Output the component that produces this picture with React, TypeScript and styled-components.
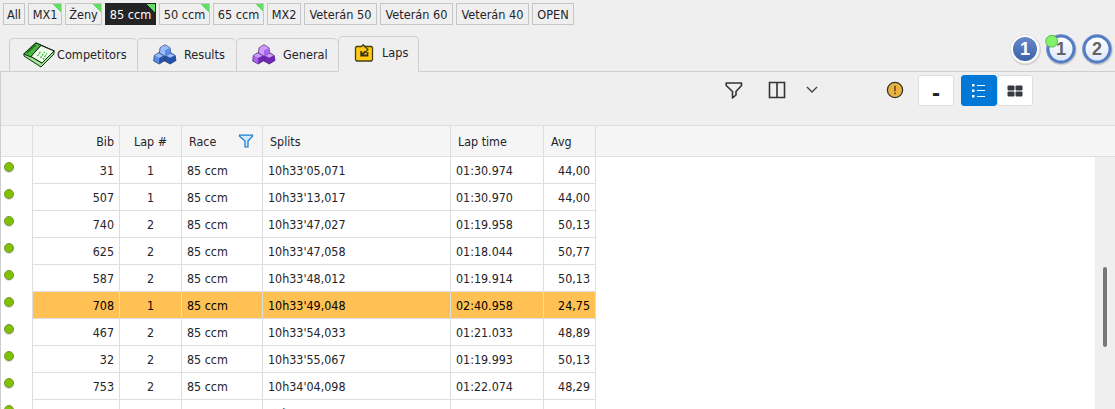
import React from "react";
import styled, { createGlobalStyle } from "styled-components";

const Global = createGlobalStyle`
  * { box-sizing: border-box; }
  html, body { margin: 0; height: 409px; overflow: hidden; background: #efefef; }
  body { font: 12.4px/16px "DejaVu Sans Condensed", "DejaVu Sans", "Noto Sans", sans-serif; font-stretch: condensed; color: #242428; }
`;

const Window = styled.div`
  width: 1115px;
  height: 409px;
  overflow: hidden;
  display: flex;
  flex-direction: column;
  background: #efefef;
  white-space: nowrap;
`;

const Filters = styled.div`
  display: flex;
  gap: 3px;
  padding: 3px 3px 0;
  height: 28px;
  flex: none;
`;

const Chip = styled.button<{ $w: number; $active?: boolean; $marked?: boolean }>`
  width: ${(p) => p.$w}px;
  height: 22px;
  padding: 2px 0 0;
  display: flex;
  align-items: center;
  justify-content: center;
  font: inherit;
  font-size: 12.6px;
  border: 1px solid ${(p) => (p.$active ? "#242424" : "#c6c6c6")};
  color: ${(p) => (p.$active ? "#fff" : "#242428")};
  background: ${(p) =>
    (p.$marked ? "linear-gradient(45deg, transparent 50%, #5fdf62 50%) top right / 8px 8px no-repeat, " : "") +
    (p.$active ? "#242424" : "#efefef")};
`;

const TabStrip = styled.div`
  display: flex;
  align-items: flex-end;
  height: 44px;
  flex: none;
  justify-content: space-between;
  box-shadow: inset 0 -1px #cecece;
`;

const Tabs = styled.div`
  display: flex;
  align-items: flex-end;
  padding-left: 9px;
`;

const Tab = styled.div<{ $w: number; $gap: number; $pad: number; $active?: boolean }>`
  width: ${(p) => p.$w}px;
  height: ${(p) => (p.$active ? 36 : 34)}px;
  padding-left: ${(p) => p.$pad}px;
  padding-bottom: ${(p) => (p.$active ? 2 : 1)}px;
  display: flex;
  align-items: center;
  gap: ${(p) => p.$gap}px;
  border: 1px solid #cecece;
  border-right-width: ${(p) => (p.$active ? 1 : 0)}px;
  border-bottom-color: ${(p) => (p.$active ? "#efefef" : "#cecece")};
  border-radius: 5px 5px 0 0;
  font-size: 12.6px;
`;

const Badges = styled.div`
  display: flex;
  height: 40px;
`;

const Toolbar = styled.div`
  height: 53px;
  flex: none;
  display: flex;
  align-items: flex-start;
  padding: 3px 0 0 724px;
  border-left: 1px solid #cecece;
`;

const ToolIcon = styled.span<{ $after: number }>`
  display: flex;
  align-items: center;
  height: 30px;
  margin-right: ${(p) => p.$after}px;
`;

const ToolButton = styled.button<{ $blue?: boolean; $after?: number }>`
  width: 36px;
  height: 31px;
  padding: 0;
  margin-right: ${(p) => p.$after ?? 0}px;
  display: flex;
  align-items: center;
  justify-content: center;
  border: 1px solid ${(p) => (p.$blue ? "#0078d7" : "#dedede")};
  border-radius: 3px;
  background: ${(p) => (p.$blue ? "#0078d7" : "#fff")};
`;

const Dash = styled.span`
  font: bold 24px/20px "Liberation Sans", sans-serif;
  color: #202024;
  padding-top: 5px;
`;

const Grid = styled.div`
  flex: 1;
  min-height: 0;
  display: flex;
  flex-direction: column;
  border-left: 1px solid #cecece;
`;

const columns = "32px 87px 62px 81px 188px 93px 52px 1fr";

const HeaderRow = styled.div`
  display: grid;
  grid-template-columns: ${columns};
  height: 32px;
  flex: none;
  border: solid #dedede;
  border-width: 1px 0;
  background: #f5f5f5;
`;

const HeadCell = styled.div<{ $align?: string }>`
  display: flex;
  align-items: center;
  justify-content: ${(p) => p.$align ?? "space-between"};
  padding: 2px ${(p) => (p.$align === "center" ? 0 : p.$align ? 5 : 8)}px 0 ${(p) => (p.$align === "center" ? 0 : 7)}px;
  border-right: 1px solid #dedede;
  &:last-child { border: 0; }
`;

const Body = styled.div`
  flex: 1;
  min-height: 0;
  display: flex;
  overflow: hidden;
`;

const Rows = styled.div`
  flex: 1;
  background: #fff;
`;

const Row = styled.div`
  display: grid;
  grid-template-columns: ${columns};
  height: 27px;
`;

const Gutter = styled.div`
  border-right: 1px solid #dedede;
  padding: 5px 0 0 3px;
`;

const Dot = styled.div`
  width: 10px;
  height: 10px;
  border-radius: 50%;
  border: 1px solid #75983e;
  background: #80c200;
  box-shadow: 0 1px 1px #d8d8d8;
`;

const Cell = styled.div<{ $align?: string; $late?: boolean }>`
  display: flex;
  align-items: center;
  justify-content: ${(p) => p.$align ?? "flex-start"};
  padding: 2px 5px 0;
  border: solid #dedede;
  border-width: 0 1px 1px 0;
  background: ${(p) => (p.$late ? "#ffc154" : "#fff")};
  color: ${(p) => (p.$late ? "#000" : "#242428")};
`;

const ScrollTrack = styled.div`
  width: 20px;
  padding: 110px 0 0 8px;
  background: #efefef;
`;

const ScrollThumb = styled.div`
  width: 4px;
  height: 80px;
  border-radius: 2px;
  background: #777;
`;

function NotesIcon() {
  return (
    <svg width="32" height="26" viewBox="0 0 32 26">
      <path d="M1 12 13 1 31 9 18 24Z" fill="#fff" stroke="#102010" strokeWidth="1.2" />
      <path d="M1 12v2L18 25 31 12V9L19 21 9 15Z" fill="#9be78d" stroke="#123012" />
      <path d="M1 12 13 1 18 3 8 15Z" fill="#49b742" stroke="#123c12" />
      <path d="M4 11 13 3" stroke="#1d7a1b" strokeWidth="1.5" />
      <path d="M8 14.5 18 3.4 31 9 19 21Z" fill="#effdea" stroke="#102010" />
      <path d="m14.5 14 3.5-5m-.5 7 4-6m-1.5 7.5 4-6" stroke="#32b82c" strokeWidth="1.3" strokeDasharray="2 1" />
    </svg>
  );
}

function CubesIcon({ light, mid, dark, edge }: { light: string; mid: string; dark: string; edge: string }) {
  const cube = (x: number, y: number, face: string, side: string) => (
    <g transform={`translate(${x} ${y})`} stroke={edge} strokeWidth=".7" strokeLinejoin="round">
      <path d="M1 3 6 0l5 3 .8 5L6 11.5.5 8.5Z" fill={face} />
      <path d="M6 5.5 11 3l.8 5L6 11.5Z" fill={side} stroke="none" />
      <path d="M1.5 3 6 .7 10.5 3 6 5.2Z" fill={light} stroke="none" />
    </g>
  );
  return (
    <svg width="24" height="21" viewBox="0 0 24 21">
      {cube(0.2, 8.5, mid, dark)}
      {cube(11.2, 8.5, dark, dark)}
      {cube(6, 0.7, light, mid)}
    </svg>
  );
}

function LapIcon() {
  return (
    <svg width="20" height="19" viewBox="0 0 20 19">
      <path d="M2.5 2.5h5L9 .9l2 1.6h6.5l1 1v12l-1 1.5h-15l-1-1.5v-12Z" fill="#ffca12" stroke="#454019" strokeWidth="1.3" />
      <path d="M9 .8 14 5.5l-3 3" fill="none" stroke="#454019" strokeWidth="1.2" />
      <path d="M7.2 7v4.5h6.3V8M7.5 11l4-3.5" fill="none" stroke="#38371e" strokeWidth="1.8" />
    </svg>
  );
}

function NumberBadge({ value, filled, online }: { value: string; filled?: boolean; online?: boolean }) {
  const id = filled ? "full" : "pale";
  return (
    <svg width="36" height="34" viewBox="0 0 36 34">
      <defs>
        <linearGradient id={id} x1="0" y1="0" x2="0" y2="1">
          <stop stopColor={filled ? "#6689c9" : "#fff"} />
          <stop offset="1" stopColor={filled ? "#3c62aa" : "#dfe7fa"} />
        </linearGradient>
      </defs>
      <circle cx="18.6" cy="18" r="15.3" fill="#c2c2c2" opacity=".65" />
      <circle cx="18" cy="17" r="14.6" fill={filled ? "#fff" : "#517cc4"} stroke={filled ? "#ddd" : "#8199c6"} strokeWidth=".7" />
      <circle cx="18" cy="17" r={filled ? 12 : 11.5} fill={`url(#${id})`} />
      <text x="18" y="23" textAnchor="middle" fontFamily="Liberation Sans, sans-serif" fontWeight="700" fontSize="18" fill={filled ? "#fff" : "#646464"}>
        {value}
      </text>
      {online && <circle cx="8.7" cy="9.2" r="5.9" fill="#83f26b" stroke="#5db84e" />}
    </svg>
  );
}

const chips: [string, number, boolean][] = [
  ["All", 22, false],
  ["MX1", 34, true],
  ["Ženy", 37, true],
  ["85 ccm", 51, true],
  ["50 ccm", 51, true],
  ["65 ccm", 51, true],
  ["MX2", 34, false],
  ["Veterán 50", 73, false],
  ["Veterán 60", 73, false],
  ["Veterán 40", 73, false],
  ["OPEN", 42, false],
];

const laps: [string, string, string, string, string][] = [
  ["31", "1", "10h33'05,071", "01:30.974", "44,00"],
  ["507", "1", "10h33'13,017", "01:30.970", "44,00"],
  ["740", "2", "10h33'47,027", "01:19.958", "50,13"],
  ["625", "2", "10h33'47,058", "01:18.044", "50,77"],
  ["587", "2", "10h33'48,012", "01:19.914", "50,13"],
  ["708", "1", "10h33'49,048", "02:40.958", "24,75"],
  ["467", "2", "10h33'54,033", "01:21.033", "48,89"],
  ["32", "2", "10h33'55,067", "01:19.993", "50,13"],
  ["753", "2", "10h34'04,098", "01:22.074", "48,29"],
  ["", "", "10h34'", "", ""],
];

export default function App() {
  return (
    <Window>
      <Global />
      <Filters>
        {chips.map(([label, w, marked]) => (
          <Chip key={label} $w={w} $marked={marked} $active={label === "85 ccm"}>
            {label}
          </Chip>
        ))}
      </Filters>
      <TabStrip>
        <Tabs>
          <Tab $w={128} $pad={13} $gap={2}><NotesIcon />Competitors</Tab>
          <Tab $w={99} $pad={15} $gap={7}>
            <CubesIcon light="#9bbdff" mid="#5a8de4" dark="#2553a8" edge="#213457" />Results
          </Tab>
          <Tab $w={102} $pad={15} $gap={7}>
            <CubesIcon light="#ce9bff" mid="#a966ec" dark="#6d29b6" edge="#482161" />General
          </Tab>
          <Tab $w={81} $pad={15} $gap={8} $active><LapIcon />Laps</Tab>
        </Tabs>
        <Badges>
          <NumberBadge value="1" filled />
          <NumberBadge value="1" online />
          <NumberBadge value="2" />
        </Badges>
      </TabStrip>
      <Toolbar>
        <ToolIcon $after={25}>
          <svg width="18" height="18" viewBox="0 0 18 18" fill="none" stroke="#333" strokeWidth="1.6" strokeLinejoin="round">
            <path d="M1.2 2h15.3v2.5L11 10.5V14l-3.5 3v-6.5L1.2 4.5Z" />
          </svg>
        </ToolIcon>
        <ToolIcon $after={20}>
          <svg width="18" height="18" viewBox="0 0 18 18" fill="none" stroke="#333" strokeWidth="1.6">
            <path d="M1.5 1.5h15v15h-15ZM9 1.5v15" />
          </svg>
        </ToolIcon>
        <ToolIcon $after={68}>
          <svg width="12" height="8" viewBox="0 0 12 8" fill="none" stroke="#444" strokeWidth="1.4">
            <path d="m1 1 5 5 5-5" />
          </svg>
        </ToolIcon>
        <ToolIcon $after={14}>
          <svg width="18" height="18" viewBox="0 0 18 18">
            <circle cx="9" cy="9" r="7.6" fill="#ebb240" stroke="#333" strokeWidth="1.3" />
            <path d="M9 4.7v5.6M9 11.6v1.7" stroke="#51411f" strokeWidth="1.4" />
          </svg>
        </ToolIcon>
        <ToolButton $after={7}><Dash>-</Dash></ToolButton>
        <ToolButton $blue>
          <svg width="14" height="14" viewBox="0 0 14 14" fill="#fff">
            <path d="M0 0h2.5v2.5H0zM0 5.5h2.5V8H0zM0 11h2.5v2.5H0zM5 1h8v1H5zM5 6h8v1H5zM5 12h8v1H5z" />
          </svg>
        </ToolButton>
        <ToolButton>
          <svg width="16" height="12" viewBox="0 0 16 12" fill="#363a40">
            <rect x=".5" y=".5" width="7" height="5" rx="1" /><rect x="8.5" y=".5" width="7" height="5" rx="1" />
            <rect x=".5" y="6.5" width="7" height="5" rx="1" /><rect x="8.5" y="6.5" width="7" height="5" rx="1" />
          </svg>
        </ToolButton>
      </Toolbar>
      <Grid>
        <HeaderRow>
          <HeadCell />
          <HeadCell $align="flex-end">Bib</HeadCell>
          <HeadCell $align="center">Lap #</HeadCell>
          <HeadCell>
            Race
            <svg width="16" height="16" viewBox="0 0 16 16">
              <path d="M1.5 1.2h13v1L10 7v6H7V7L1.5 2.2Z" fill="#d5e9f8" stroke="#167dd0" strokeWidth="1.2" />
            </svg>
          </HeadCell>
          <HeadCell>Splits</HeadCell>
          <HeadCell>Lap time</HeadCell>
          <HeadCell>Avg</HeadCell>
          <HeadCell />
        </HeaderRow>
        <Body>
          <Rows>
            {laps.map(([bib, lap, split, time, avg], i) => {
              const late = bib === "708";
              return (
                <Row key={i}>
                  <Gutter><Dot /></Gutter>
                  <Cell $late={late} $align="flex-end">{bib}</Cell>
                  <Cell $late={late} $align="center">{lap}</Cell>
                  <Cell $late={late}>{bib && "85 ccm"}</Cell>
                  <Cell $late={late}>{split}</Cell>
                  <Cell $late={late}>{time}</Cell>
                  <Cell $late={late} $align="flex-end">{avg}</Cell>
                </Row>
              );
            })}
          </Rows>
          <ScrollTrack><ScrollThumb /></ScrollTrack>
        </Body>
      </Grid>
    </Window>
  );
}
